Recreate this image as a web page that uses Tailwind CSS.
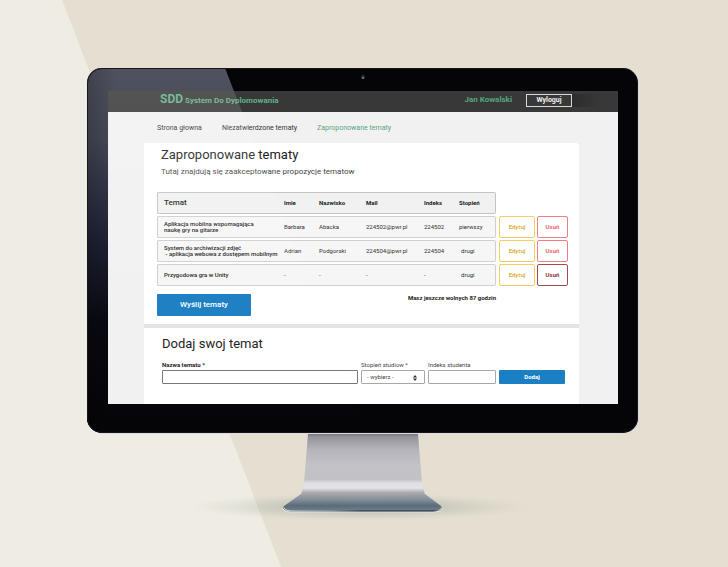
<!DOCTYPE html>
<html lang="pl">
<head>
<meta charset="utf-8">
<meta name="viewport" content="width=device-width, initial-scale=1">
<title>SDD System Do Dyplomowania</title>
<script src="https://cdn.jsdelivr.net/npm/@tailwindcss/browser@4"></script>
</head>
<body class="relative min-h-screen overflow-hidden bg-[#e5dfd1] font-['Roboto',sans-serif] text-[#222]">
<!-- Diagonal light area -->
<svg class="absolute inset-0 h-full w-full" viewBox="0 0 728 567" preserveAspectRatio="none" aria-hidden="true"><path d="M0 0H62L281 567H0Z" fill="#efede3"/></svg>

<div class="relative pt-[68px] pr-[90px] pl-[87px]">
  <!-- Monitor -->
  <div class="relative overflow-hidden rounded-[15px] bg-[#050508] pt-[23px] pr-[20px] pb-[29px] pl-[21px] shadow-[1px_1px_0_#dddae0]">
    <svg class="absolute top-0 left-0 h-full w-full" viewBox="0 0 551 365" preserveAspectRatio="none" aria-hidden="true">
      <defs>
        <linearGradient id="bezel" x1="0" y1="0" x2="0" y2="1">
          <stop offset="0" stop-color="#50525f"/><stop offset=".2" stop-color="#474959"/><stop offset=".45" stop-color="#23253a"/><stop offset=".7" stop-color="#090911"/><stop offset="1" stop-color="#050508"/>
        </linearGradient>
        <linearGradient id="edge" x1="0" y1="0" x2="1" y2="0">
          <stop offset="0" stop-color="#000" stop-opacity=".2"/><stop offset="1" stop-color="#000" stop-opacity="0"/>
        </linearGradient>
      </defs>
      <path d="M0 0H138L279 365H0Z" fill="url(#bezel)"/>
      <path d="M0 0H30V365H0Z" fill="url(#edge)"/>
      <rect x=".5" y=".5" width="550" height="364" rx="14.500" fill="none" stroke="#15161d"/>
      <circle cx="276" cy="9" r="2" fill="#2b3136"/><circle cx="276" cy="10" r="1" fill="#7d868a"/>
    </svg>

    <div class="relative overflow-hidden bg-[#f1f1f1]">
      <header class="flex h-[21px] items-center bg-[#383838] pb-[3px] pl-[52px]">
        <p class="text-[8px] leading-[14px] font-bold text-[#62b08a]"><span class="text-[12px]">SDD</span> System Do Dyplomowania</p>
        <span class="ml-auto text-[8px] leading-[14px] font-bold text-[#55a77e]">Jan Kowalski</span>
        <button type="button" class="ml-[14px] h-[13px] w-[46px] border border-[#d8d8d8] text-[7px] leading-[10px] font-bold text-[#f1f1f1]">Wyloguj</button>
        <span class="mr-[16px] h-[13px] w-[30px] bg-linear-to-r from-[#2c2c2c] to-[#383838]"></span>
      </header>

      <nav class="flex h-[31px] items-center gap-5 pl-[49px] text-[7px] leading-[10px] text-[#333]">
        <a href="#">Strona głowna</a>
        <a href="#">Niezatwierdzone tematy</a>
        <a href="#" class="text-[#55a77e]" aria-current="page">Zaproponowane tematy</a>
      </nav>

      <main class="mr-[39px] ml-[36px] bg-[#e5e5e5]">
        <section class="rounded-tr-[2px] bg-white pt-[5px] pr-[11px] pb-[8px] pl-[13px]">
          <h1 class="pl-[4px] text-[13px] leading-[14px]">Zaproponowane tematy</h1>
          <p class="mt-[5px] pl-[4px] text-[8px] leading-[10px] text-[#444]">Tutaj znajdują się zaakceptowane propozycje tematow</p>

          <table class="mt-[13px] w-full table-fixed border-separate border-spacing-x-0 border-spacing-y-[2px] text-left text-[6px] leading-[6px]">
            <colgroup><col><col class="w-[35px]"><col class="w-[47px]"><col class="w-[58px]"><col class="w-[35px]"><col class="w-[37px]"><col class="w-[39px]"><col class="w-[33px]"></colgroup>
            <thead>
              <tr class="h-[22px]">
                <th class="rounded-l-[2px] border-y border-l border-[#c4c4c4] bg-[#f1f1f1] pl-[6px] text-[8px] font-medium">Temat</th>
                <th class="border-y border-[#c4c4c4] bg-[#f1f1f1]">Imie</th>
                <th class="border-y border-[#c4c4c4] bg-[#f1f1f1]">Nazwisko</th>
                <th class="border-y border-[#c4c4c4] bg-[#f1f1f1]">Mail</th>
                <th class="border-y border-[#c4c4c4] bg-[#f1f1f1]">Indeks</th>
                <th class="rounded-r-[2px] border-y border-r border-[#c4c4c4] bg-[#f1f1f1]">Stopień</th>
                <td></td><td></td>
              </tr>
            </thead>
            <tbody class="text-[#333]">
              <tr class="h-[22px]">
                <th class="rounded-l-[2px] border-y border-l border-[#cfcfcf] bg-[#f6f6f6] pl-[6px] font-medium text-[#222]">Aplikacja mobilna wspomagająca<br>naukę gry na gitarze</th>
                <td class="border-y border-[#cfcfcf] bg-[#f6f6f6]">Barbara</td>
                <td class="border-y border-[#cfcfcf] bg-[#f6f6f6]">Abacka</td>
                <td class="border-y border-[#cfcfcf] bg-[#f6f6f6]">224502@pwr.pl</td>
                <td class="border-y border-[#cfcfcf] bg-[#f6f6f6]">224502</td>
                <td class="rounded-r-[2px] border-y border-r border-[#cfcfcf] bg-[#f6f6f6]">pierwszy</td>
                <td class="pl-[3px]"><button type="button" class="block h-[22px] w-full rounded-[2px] border border-[#f3cf62] bg-white font-bold text-[#d8b545]">Edytuj</button></td>
                <td class="pl-[2px]"><button type="button" class="block h-[22px] w-full rounded-[2px] border border-[#f07f82] bg-white font-bold text-[#f0686c]">Usuń</button></td>
              </tr>
              <tr class="h-[22px]">
                <th class="rounded-l-[2px] border-y border-l border-[#cfcfcf] bg-[#f6f6f6] pl-[6px] font-medium whitespace-nowrap text-[#222]">System do archiwizacji zdjęć<br>&nbsp;- aplikacja webowa z dostępem mobilnym</th>
                <td class="border-y border-[#cfcfcf] bg-[#f6f6f6]">Adrian</td>
                <td class="border-y border-[#cfcfcf] bg-[#f6f6f6]">Podgorski</td>
                <td class="border-y border-[#cfcfcf] bg-[#f6f6f6]">224504@pwr.pl</td>
                <td class="border-y border-[#cfcfcf] bg-[#f6f6f6]">224504</td>
                <td class="rounded-r-[2px] border-y border-r border-[#cfcfcf] bg-[#f6f6f6] pl-[2px]">drugi</td>
                <td class="pl-[3px]"><button type="button" class="block h-[22px] w-full rounded-[2px] border border-[#f3cf62] bg-white font-bold text-[#d8b545]">Edytuj</button></td>
                <td class="pl-[2px]"><button type="button" class="block h-[22px] w-full rounded-[2px] border border-[#f07f82] bg-white font-bold text-[#f0686c]">Usuń</button></td>
              </tr>
              <tr class="h-[22px]">
                <th class="rounded-l-[2px] border-y border-l border-[#cfcfcf] bg-[#f6f6f6] pl-[6px] font-medium text-[#222]">Przygodowa gra w Unity</th>
                <td class="border-y border-[#cfcfcf] bg-[#f6f6f6]">-</td>
                <td class="border-y border-[#cfcfcf] bg-[#f6f6f6]">-</td>
                <td class="border-y border-[#cfcfcf] bg-[#f6f6f6]">-</td>
                <td class="border-y border-[#cfcfcf] bg-[#f6f6f6]">-</td>
                <td class="rounded-r-[2px] border-y border-r border-[#cfcfcf] bg-[#f6f6f6] pl-[2px]">drugi</td>
                <td class="pl-[3px]"><button type="button" class="block h-[22px] w-full rounded-[2px] border border-[#f3cf62] bg-white font-bold text-[#d8b545]">Edytuj</button></td>
                <td class="pl-[2px]"><button type="button" class="block h-[22px] w-full rounded-[2px] border border-[#a04a4e] bg-white font-bold text-[#8f3438]">Usuń</button></td>
              </tr>
            </tbody>
          </table>

          <div class="mt-[6px] flex items-start justify-between pr-[72px]">
            <button type="button" class="h-[22px] w-[94px] rounded-[1px] bg-[#1b7fc3] text-[8px] leading-[10px] font-medium text-white">Wyślij tematy</button>
            <p class="text-[6px] leading-[8px] font-bold">Masz jeszcze wolnych 87 godzin</p>
          </div>
        </section>

        <section class="mt-[4px] bg-white pt-[9px] pr-[14px] pb-[20px] pl-[18px]">
          <h2 class="text-[13px] leading-[14px]">Dodaj swoj temat</h2>
          <form class="mt-[10px] flex items-end gap-[3px] text-[6px] leading-[8px] text-[#444]">
            <div class="min-w-0 flex-1">
              <label for="nazwa" class="block font-bold text-[#222]">Nazwa tematu *</label>
              <input id="nazwa" type="text" class="mt-[1px] block h-[14px] w-full rounded-[1px] border border-[#777] bg-white px-1">
            </div>
            <div class="w-[64px]">
              <label for="stopien" class="block">Stopień studiow *</label>
              <div class="relative mt-[1px]">
                <select id="stopien" class="block h-[14px] w-full appearance-none rounded-[1px] border border-[#a8a8a8] bg-white pl-[5px]"><option>- wybierz -</option><option>pierwszy</option><option>drugi</option></select>
                <svg class="pointer-events-none absolute top-[5px] right-[8px] h-[6px] w-[4px]" viewBox="0 0 4 6" aria-hidden="true"><path d="M2 0L4 2.500H0ZM2 6L0 3.500H4Z" fill="#26313c"/></svg>
              </div>
            </div>
            <div class="w-[68px]">
              <label for="indeks" class="block">Indeks studenta</label>
              <input id="indeks" type="text" class="mt-[1px] block h-[14px] w-full rounded-[1px] border border-[#a8a8a8] bg-white px-1">
            </div>
            <button type="submit" class="h-[14px] w-[66px] rounded-[1px] bg-[#1b7fc3] font-bold text-white">Dodaj</button>
          </form>
        </section>
      </main>

      <!-- Glass reflection -->
      <svg class="pointer-events-none absolute inset-0 h-full w-full" viewBox="0 0 510 313" preserveAspectRatio="none" aria-hidden="true">
        <defs><linearGradient id="glare" x1="0" y1="0" x2="0" y2="1"><stop offset="0" stop-color="#fff" stop-opacity=".14"/><stop offset=".4" stop-color="#fff" stop-opacity=".09"/><stop offset=".65" stop-color="#fff" stop-opacity=".02"/><stop offset="1" stop-color="#fff" stop-opacity="0"/></linearGradient></defs>
        <path d="M0 0H126L247 313H0Z" fill="url(#glare)"/>
      </svg>
    </div>
  </div>

  <!-- Stand and floor shadow -->
  <svg class="mx-auto block h-[100px] w-[360px]" viewBox="0 0 360 100" aria-hidden="true">
    <defs>
      <linearGradient id="neck" x1="0" y1="0" x2="0" y2="1">
        <stop offset="0" stop-color="#77777d"/><stop offset=".04" stop-color="#929298"/><stop offset=".25" stop-color="#b5b5bb"/><stop offset=".5" stop-color="#c2c2c7"/><stop offset=".72" stop-color="#c1c1c6"/><stop offset=".78" stop-color="#e0e0e4"/><stop offset=".86" stop-color="#e3e3e6"/><stop offset=".93" stop-color="#aaaab0"/><stop offset="1" stop-color="#98989f"/>
      </linearGradient>
      <linearGradient id="base" x1="0" y1="0" x2="0" y2="1">
        <stop offset="0" stop-color="#a0a1a8"/><stop offset=".3" stop-color="#84909a"/><stop offset=".65" stop-color="#5b6b78"/><stop offset="1" stop-color="#738591"/>
      </linearGradient>
      <linearGradient id="shine" x1="0" y1="0" x2="1" y2="0">
        <stop offset="0" stop-color="#d5d9d8"/><stop offset=".3" stop-color="#8f9ca5"/><stop offset=".5" stop-color="#13202b"/><stop offset=".95" stop-color="#13202b"/><stop offset="1" stop-color="#c9ced0"/>
      </linearGradient>
      <radialGradient id="floor"><stop offset="0" stop-color="#7f8c88" stop-opacity=".6"/><stop offset=".55" stop-color="#98a39c" stop-opacity=".28"/><stop offset="1" stop-color="#b5b9ad" stop-opacity="0"/></radialGradient>
    </defs>
    <ellipse cx="178" cy="74" rx="172" ry="14" fill="url(#floor)"/>
    <path d="M118 61L101 73Q98 77 108 79H251Q261 77 258 73L242 61Z" fill="url(#base)"/>
    <path d="M125 1H235L239 50L242 62Q180 66 118 62L121 50Z" fill="url(#neck)"/>
    <path d="M101 75Q103 78 110 78H249Q256 78 258 75" fill="none" stroke="url(#shine)"/>
    <path d="M99 75Q101 79 109 79H250Q258 79 260 75" fill="none" stroke="#f1f1ed" stroke-width=".6"/>
  </svg>
</div>
</body>
</html>
